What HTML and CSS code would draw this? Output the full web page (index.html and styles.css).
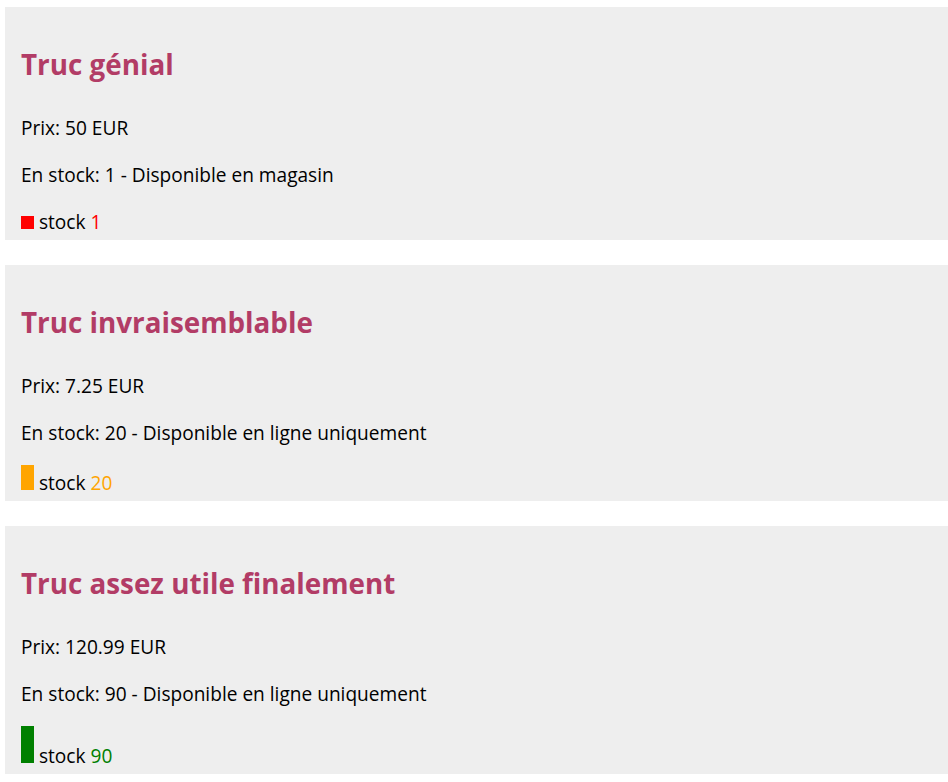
FILE: index.html
```html
<!DOCTYPE html>
<html lang="fr">
<head>
<meta charset="utf-8">
<title>Produits</title>
<link rel="stylesheet" href="styles.css">
</head>
<body>
  <div class="card">
    <h2 class="title">Truc génial</h2>
    <p class="line">Prix: 50 EUR</p>
    <p class="line">En stock: 1 - Disponible en magasin</p>
    <p class="line stock"><span class="bar bar-low"></span> stock <span class="qty qty-low">1</span></p>
  </div>
  <div class="card">
    <h2 class="title">Truc invraisemblable</h2>
    <p class="line">Prix: 7.25 EUR</p>
    <p class="line">En stock: 20 - Disponible en ligne uniquement</p>
    <p class="line stock"><span class="bar bar-mid"></span> stock <span class="qty qty-mid">20</span></p>
  </div>
  <div class="card">
    <h2 class="title">Truc assez utile finalement</h2>
    <p class="line">Prix: 120.99 EUR</p>
    <p class="line">En stock: 90 - Disponible en ligne uniquement</p>
    <p class="line stock"><span class="bar bar-high"></span> stock <span class="qty qty-high">90</span></p>
  </div>
</body>
</html>
```

FILE: styles.css
```css
html, body {
  background: #ffffff;
}
body {
  margin: 7px 0 0 5px;
  font-family: "Open Sans", "Noto Sans", sans-serif;
  font-size: 19.1px;
  color: #000;
}
.card {
  background: #eeeeee;
  padding: 0 16px 2px 16px;
  margin-bottom: 25px;
  display: flow-root;
}
.title {
  margin: 37px 0 31px 0;
  font-size: 27.8px;
  line-height: 40px;
  font-weight: 700;
  color: #b23c66;
}
.line {
  margin: 20px 0;
  line-height: 27px;
}
.stock {
  margin-top: -2px;
  margin-bottom: 0;
  line-height: 31px;
}
.bar {
  display: inline-block;
  width: 13px;
  vertical-align: baseline;
}
.bar-low { height: 13px; background: #ff0000; }
.bar-mid { height: 25px; background: #ffa500; }
.bar-high { height: 37px; background: #008000; }
.qty-low { color: #ff0000; }
.qty-mid { color: #ffa500; }
.qty-high { color: #008000; }
```
